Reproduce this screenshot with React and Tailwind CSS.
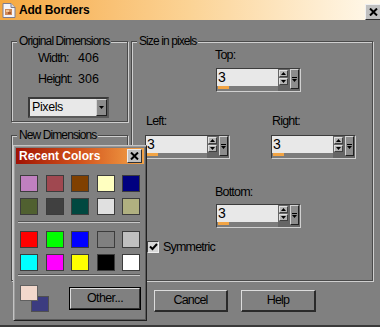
import React from 'react';

const recentRows = [
  ['#c080c0', '#a04850', '#804000', '#ffffc0', '#000080'],
  ['#506030', '#404040', '#004840', '#e0e0e0', '#b0b080'],
];

const basicRows = [
  ['#ff0000', '#00ff00', '#0000ff', '#808080', '#c0c0c0'],
  ['#00ffff', '#ff00ff', '#ffff00', '#000000', '#ffffff'],
];

const Frame = ({ legend, className = '', children }) => (
  <fieldset
    className={`border border-[#4a4a4a] shadow-[inset_1px_1px_0_#cfcfcf,1px_1px_0_#cfcfcf] ${className}`}
  >
    <legend className="ml-[5px] px-[2px] bg-[#808080] text-[12px] leading-[14px] tracking-[-0.9px] whitespace-nowrap text-black">
      {legend}
    </legend>
    {children}
  </fieldset>
);

// small black triangle used in the spin and drop buttons
const Tri = ({ up = false, w = 5 }) => (
  <svg width={w} height={3} viewBox="0 0 5 3" className="block">
    <path d={up ? 'M2.5 0L5 3H0z' : 'M0 0h5L2.5 3z'} fill="#000" />
  </svg>
);

const SpinBtn = ({ up }) => (
  <div className="w-[9px] h-[7px] bg-[#b4b4b4] border-t border-l border-[#e0e0e0] border-r border-b border-r-[#404040] border-b-[#404040] flex items-center justify-center">
    <Tri up={up} />
  </div>
);

const DropBtn = () => (
  <div className="w-[9px] h-[20px] bg-[#8c8c8c] border-t border-l border-[#d4d4d4] border-r border-b border-r-[#202020] border-b-[#202020] flex flex-col items-center justify-center gap-[1px]">
    <div className="w-[5px] h-[1px] bg-black" />
    <Tri />
  </div>
);

const SpinBox = ({ value = '3', className = '' }) => (
  <div
    className={`flex w-[85px] h-[24px] bg-[#666666] border-t border-l border-[#3c3c3c] border-r border-b border-r-[#d0d0d0] border-b-[#d0d0d0] ${className}`}
  >
    <div className="flex flex-col w-[61px]">
      <div className="h-[17px] bg-[#e8e8e8] pl-[1px] text-[14px] leading-[17px] tracking-normal text-black">
        {value}
      </div>
      <div className="flex-1 bg-[#7c7c7c] pl-[1px]">
        <div className="w-[11px] h-[3px] bg-[#f2a444]" />
      </div>
    </div>
    <div className="flex flex-col gap-[1px] pt-[1px] w-[10px] items-center">
      <SpinBtn up />
      <SpinBtn />
    </div>
    <div className="ml-[2px]">
      <DropBtn />
    </div>
  </div>
);

const Swatch = ({ color }) => (
  <div className="w-[18px] h-[17px] border border-[#3c3c3c]" style={{ backgroundColor: color }} />
);

const SwatchRows = ({ rows }) => (
  <div className="flex flex-col gap-[6px]">
    {rows.map((row, i) => (
      <div key={i} className="flex gap-[7.5px]">
        {row.map((c) => (
          <Swatch key={c} color={c} />
        ))}
      </div>
    ))}
  </div>
);

const Separator = ({ className = '' }) => (
  <div className={`ml-[2px] w-[122px] h-[2px] border-t border-[#555555] border-b border-b-[#c8c8c8] ${className}`} />
);

const Button = ({ children, className = '' }) => (
  <div
    className={`h-[22px] flex items-center justify-center bg-[#808080] border-t border-l border-[#dcdcdc] border-r-2 border-b-2 border-r-[#2a2a2a] border-b-[#2a2a2a] text-[12.5px] tracking-[-0.8px] text-black ${className}`}
  >
    {children}
  </div>
);

const RecentColors = () => (
  <div className="absolute left-[13px] top-[145px] w-[134px] h-[176px] bg-[#808080] border border-[#c4c4c4] border-r-[#202020] border-b-[#202020] shadow-[inset_1px_1px_0_#9c9c9c,inset_-1px_-1px_0_#5a5a5a] p-[2px]">
    <div className="h-[16px] flex items-center justify-between pl-[3px] pr-[2px] bg-linear-to-r from-[#a00e04] via-[#d2521c] to-[#f3a448]">
      <span className="text-white font-bold text-[12px] leading-[14px] tracking-normal">Recent Colors</span>
      <div className="w-[15px] h-[14px] bg-[#c0c0c0] border-t border-l border-[#ececec] border-r border-b border-r-[#303030] border-b-[#303030] flex items-center justify-center">
        <svg width="9" height="8" viewBox="0 0 9 8">
          <path d="M1 0.5l7 7M8 0.5l-7 7" stroke="#000" strokeWidth="2" />
        </svg>
      </div>
    </div>
    <div className="pl-[4px] pt-[11px]">
      <SwatchRows rows={recentRows} />
    </div>
    <Separator className="mt-[6px]" />
    <div className="pl-[4px] pt-[8px]">
      <SwatchRows rows={basicRows} />
    </div>
    <Separator className="mt-[3px]" />
    <div className="flex pl-[4px] pt-[9px]">
      <div className="relative w-[29px] h-[27px]">
        <div className="absolute left-[11px] top-[11px] w-[18px] h-[16px] bg-[#3c3c80] border border-[#505050]" />
        <div className="absolute left-0 top-0 w-[18px] h-[16px] bg-[#f2d8cc] border border-[#606060]" />
      </div>
      <div className="ml-[20px] mt-[2px] w-[72px] h-[23px] border border-black">
        <div className="w-full h-full flex items-center justify-center bg-[#808080] border-t border-l border-[#dcdcdc] border-r border-b border-r-[#303030] border-b-[#303030] text-[12.5px] tracking-[-0.6px] text-black">
          Other...
        </div>
      </div>
    </div>
  </div>
);

export default function App() {
  return (
    <div className="relative w-[380px] h-[327px] overflow-hidden bg-[#808080] border-b-2 border-[#3a3a3a] font-['Liberation_Sans',Arial,sans-serif] text-black select-none">
      {/* Title bar */}
      <div className="h-[20px] flex items-start bg-linear-to-r from-[#f5a83e] via-[#fbd395] to-[#fff9ec]">
        <svg width="14" height="15" viewBox="0 0 14 15" className="ml-[2px] mt-[3px]">
          <path d="M1 .5h8l4 4v10H1z" fill="#f4f4f8" stroke="#7c7c90" />
          <path d="M9 .5v4h4" fill="#d8d8e0" stroke="#7c7c90" />
          <rect x="3" y="6" width="7" height="6" fill="#d08a58" />
          <rect x="4" y="7" width="3" height="2" fill="#f4c898" />
          <rect x="6" y="9" width="3" height="2" fill="#a85a30" />
        </svg>
        <span className="ml-[3px] mt-[3px] font-bold text-[12px] leading-[14px] tracking-[-0.2px]">Add Borders</span>
        <div className="ml-auto mt-[4px] mr-[-1px] w-[16px] h-[16px] bg-[#c0c0c0] border-t border-l border-[#f0f0f0] border-r border-b border-r-[#303030] border-b-[#303030] flex items-center justify-center">
          <svg width="9" height="8" viewBox="0 0 9 8">
            <path d="M1 0.5l7 7M8 0.5l-7 7" stroke="#000" strokeWidth="2" />
          </svg>
        </div>
      </div>

      {/* Body */}
      <div className="flex pt-[14px] pl-[11px] gap-[3px] text-[12.5px] leading-[14px] tracking-[-0.8px]">
        <div className="flex flex-col w-[117px]">
          <Frame legend="Original Dimensions" className="h-[88px]">
            <div className="pl-[26px] pt-[3px]">
              <div className="flex">
                <span className="w-[40px]">Width:</span>
                <span className="tracking-normal">406</span>
              </div>
              <div className="flex mt-[7px]">
                <span className="w-[40px]">Height:</span>
                <span className="tracking-normal">306</span>
              </div>
            </div>
            <div className="ml-[16px] mt-[11px] w-[81px] h-[21px] flex bg-[#e8e8e8] border-2 border-[#3a3a3a] border-b-[#5a5a5a] border-r-[#5a5a5a]">
              <span className="flex-1 pl-[2px] leading-[17px] tracking-[-0.4px]">Pixels</span>
              <div className="w-[11px] h-[17px] bg-[#8c8c8c] border-t border-l border-[#d4d4d4] border-r border-b border-r-[#202020] border-b-[#202020] flex items-center justify-center">
                <Tri />
              </div>
            </div>
          </Frame>
          <Frame legend="New Dimensions" className="mt-[6px] h-[153px]" />
        </div>

        <Frame legend="Size in pixels" className="w-[242px] h-[247px]">
          <div className="ml-[83px]">Top:</div>
          <SpinBox className="ml-[84px] mt-[6px]" />

          <div className="flex mt-[22px]">
            <div className="ml-[13px]">
              <div className="ml-[1px]">Left:</div>
              <SpinBox className="mt-[7px]" />
            </div>
            <div className="ml-[41px]">
              <div className="ml-[1px]">Right:</div>
              <SpinBox className="mt-[7px]" />
            </div>
          </div>

          <div className="ml-[83px] mt-[26px]">Bottom:</div>
          <SpinBox className="ml-[84px] mt-[5px]" />

          <div className="flex items-center ml-[15px] mt-[12px]">
            <div className="w-[12px] h-[12px] bg-[#d8d8d8] border-t border-l border-[#404040] border-r border-b border-r-[#f0f0f0] border-b-[#f0f0f0] flex items-center justify-center">
              <svg width="9" height="8" viewBox="0 0 9 8">
                <path d="M1 3.5l2.5 2.5L8 1" stroke="#000" strokeWidth="2" fill="none" />
              </svg>
            </div>
            <span className="ml-[4px]">Symmetric</span>
          </div>
        </Frame>
      </div>

      {/* Buttons (the first one sits behind the colour popup) */}
      <div className="flex mt-[9px] ml-[67px] gap-[13px]">
        <Button className="w-[74px]" />
        <Button className="w-[74px]">Cancel</Button>
        <Button className="w-[75px]">Help</Button>
      </div>

      <RecentColors />
    </div>
  );
}
